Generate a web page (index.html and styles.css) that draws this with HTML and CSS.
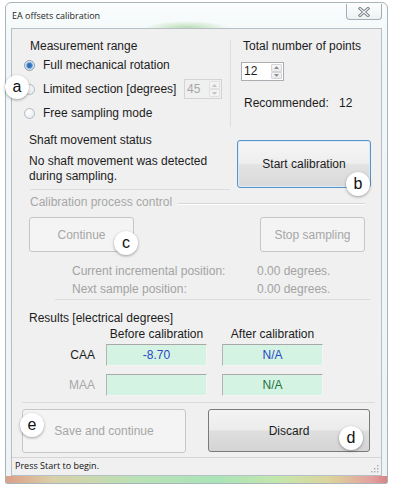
FILE: index.html
```html
<!DOCTYPE html>
<html>
<head>
<meta charset="utf-8">
<link rel="stylesheet" href="styles.css">
</head>
<body>
<div class="window">
  <div class="titlebar">
    <span class="title">EA offsets calibration</span>
    <div class="close">
      <svg width="12" height="10" viewBox="0 0 12 10"><path d="M2 1.5 L10 8.5 M10 1.5 L2 8.5" stroke="#7d8389" stroke-width="3" stroke-linecap="square"/><path d="M2 1.5 L10 8.5 M10 1.5 L2 8.5" stroke="#f4f6f7" stroke-width="1.1" stroke-linecap="square"/></svg>
    </div>
  </div>
  <div class="client">
    <div class="top">
      <div class="range">
        <div class="heading range-heading">Measurement range</div>
        <div class="radio-row"><span class="radio checked"></span><span>Full mechanical rotation</span></div>
        <div class="radio-row tall"><span class="radio"></span><span>Limited section [degrees]</span>
          <div class="spin spin-dis"><span class="spin-val">45</span><span class="spin-btns"><span class="spin-up"><svg width="5" height="3" viewBox="0 0 5 3"><path d="M0 3 L2.5 0 L5 3Z" fill="#c4c4c4"/></svg></span><span class="spin-down"><svg width="5" height="3" viewBox="0 0 5 3"><path d="M0 0 L2.5 3 L5 0Z" fill="#c4c4c4"/></svg></span></span></div>
        </div>
        <div class="radio-row"><span class="radio"></span><span>Free sampling mode</span></div>
      </div>
      <div class="vsep"></div>
      <div class="points">
        <div class="heading">Total number of points</div>
        <div class="spin spin-pts"><span class="spin-val">12</span><span class="spin-btns"><span class="spin-up"><svg width="5" height="3" viewBox="0 0 5 3"><path d="M0 3 L2.5 0 L5 3Z" fill="#8a8f94"/></svg></span><span class="spin-down"><svg width="5" height="3" viewBox="0 0 5 3"><path d="M0 0 L2.5 3 L5 0Z" fill="#8a8f94"/></svg></span></span></div>
        <div class="recommended"><span class="rec-label">Recommended:</span><span>12</span></div>
      </div>
    </div>
    <div class="status-section">
      <div class="shaft">
        <div class="line14">Shaft movement status</div>
        <div class="shaft-msg">No shaft movement was detected<br>during sampling.</div>
      </div>
      <button class="btn btn-focus start">Start calibration</button>
    </div>
    <div class="hline h1"></div>
    <div class="group">
      <div class="legend-row"><span class="legend">Calibration process control</span><span class="legend-line"></span></div>
      <div class="group-buttons">
        <button class="btn btn-dis cont" disabled>Continue</button>
        <button class="btn btn-dis stop" disabled>Stop sampling</button>
      </div>
      <div class="info">
        <span>Current incremental position:</span><span>0.00 degrees.</span>
        <span>Next sample position:</span><span>0.00 degrees.</span>
      </div>
    </div>
    <div class="hline h2"></div>
    <div class="results">
      <div class="res-heading">Results [electrical degrees]</div>
      <div class="res-grid">
        <span></span>
        <span class="col-head">Before calibration</span>
        <span class="col-head">After calibration</span>
        <span class="row-label">CAA</span>
        <span class="val blue">-8.70</span>
        <span class="val blue">N/A</span>
        <span class="row-label grey">MAA</span>
        <span class="val"></span>
        <span class="val green">N/A</span>
      </div>
    </div>
    <div class="hline h3"></div>
    <div class="bottom-buttons">
      <button class="btn btn-dis save" disabled>Save and continue</button>
      <button class="btn discard">Discard</button>
    </div>
    <div class="statusbar">
      <span class="status-text">Press Start to begin.</span>
      <svg class="grip" width="9" height="9" viewBox="0 0 9 9"><g fill="#a9a9a9"><rect x="7" y="1" width="1.4" height="1.4"/><rect x="4" y="4" width="1.4" height="1.4"/><rect x="7" y="4" width="1.4" height="1.4"/><rect x="1" y="7" width="1.4" height="1.4"/><rect x="4" y="7" width="1.4" height="1.4"/><rect x="7" y="7" width="1.4" height="1.4"/></g></svg>
    </div>
  </div>
  <div class="frame-bottom"></div>
</div>
<span class="badge badge-a">a</span>
<span class="badge badge-b">b</span>
<span class="badge badge-c">c</span>
<span class="badge badge-d">d</span>
<span class="badge badge-e">e</span>
</body>
</html>
```
FILE: styles.css
```css
html, body {
  margin: 0;
  padding: 0;
}
body {
  position: relative;
  width: 394px;
  height: 490px;
  overflow: hidden;
  background: #ffffff;
  font-family: "Liberation Sans", Arial, sans-serif;
  font-size: 12px;
  color: #1c1c1c;
}
.window {
  position: relative;
  margin: 2px 0 0 5px;
  width: 383px;
  box-sizing: border-box;
  border: 1px solid #aab4bb;
  border-radius: 6px 6px 2px 2px;
  padding: 0 5px;
  background: linear-gradient(180deg, #fafdfd 0, #f1f7f8 40px, #eef4f6 100%);
  overflow: hidden;
}
.titlebar {
  height: 25px;
  display: flex;
  justify-content: space-between;
  align-items: flex-start;
  background: radial-gradient(ellipse 42px 7px at 176px 25px, rgba(110, 185, 90, 0.45), rgba(110, 185, 90, 0) 100%);
}
.title {
  font-family: "Open Sans", "DejaVu Sans", sans-serif;
  font-size: 9px;
  line-height: 12px;
  margin: 7px 0 0 1px;
  color: #1e1e1e;
}
.close {
  width: 36px;
  height: 16px;
  margin-top: 1px;
  box-sizing: border-box;
  border: 1px solid #a3adb5;
  border-top: none;
  border-radius: 0 0 4px 4px;
  background: linear-gradient(180deg, #fdfdfd, #eef1f3);
  display: flex;
  align-items: center;
  justify-content: center;
}
.client {
  height: 448px;
  box-sizing: border-box;
  border: 1px solid #b7bec4;
  background: #f0f0f0;
}
.heading, .line14 {
  line-height: 14px;
  height: 14px;
}
.top {
  display: flex;
  height: 99px;
}
.range {
  width: 218px;
  box-sizing: border-box;
  padding: 10px 8px 0 12px;
}
.range-heading {
  padding-left: 6px;
  margin-bottom: 1px;
}
.radio-row {
  display: flex;
  align-items: center;
  height: 22px;
}
.radio-row.tall {
  height: 26px;
}
.radio {
  flex: none;
  width: 11px;
  height: 11px;
  box-sizing: border-box;
  border-radius: 50%;
  border: 1px solid #b5bbc0;
  background: radial-gradient(circle at 40% 35%, #ffffff, #e2e5e8);
  margin-right: 8px;
}
.radio.checked {
  border-color: #8e9ba8;
  background: radial-gradient(circle, #2a64ad 0, #3b7cc4 2.2px, #a9c9e8 3.4px, #eef2f6 4.5px);
}
.spin {
  display: flex;
  box-sizing: border-box;
  border: 1px solid #abadb3;
  background: #ffffff;
}
.spin-val {
  flex: 1;
  padding-left: 2px;
}
.spin-btns {
  width: 11px;
  display: flex;
  flex-direction: column;
  padding: 1px 1px 1px 0;
}
.spin-up, .spin-down {
  flex: 1;
  display: flex;
  align-items: center;
  justify-content: center;
  border: 1px solid #d3d5d8;
  background: linear-gradient(180deg, #f8f8f8, #e9e9e9);
  border-radius: 1px;
}
.spin-dis {
  width: 38px;
  height: 20px;
  margin-left: auto;
  border-color: #d2d4d7;
  background: #f0f0f0;
  color: #a6a6a6;
}
.spin-dis .spin-val {
  line-height: 18px;
}
.spin-dis .spin-up, .spin-dis .spin-down {
  border-color: #e1e2e4;
  background: #f3f3f3;
}
.vsep {
  width: 1px;
  height: 87px;
  margin-top: 11px;
  background: #dedede;
}
.points {
  padding: 10px 0 0 12px;
}
.spin-pts {
  width: 43px;
  height: 19px;
  margin: 9px 0 0 -2px;
}
.spin-pts .spin-val {
  line-height: 17px;
  padding-left: 2px;
}
.recommended {
  margin-top: 15px;
  padding-left: 1px;
  line-height: 14px;
}
.rec-label {
  display: inline-block;
  width: 95px;
}
.status-section {
  display: flex;
  justify-content: space-between;
  height: 61px;
  box-sizing: border-box;
  padding: 5px 10px 0 17px;
}
.shaft-msg {
  margin-top: 7px;
  line-height: 15px;
}
.btn {
  font-family: "Liberation Sans", Arial, sans-serif;
  font-size: 12px;
  padding: 0;
  margin: 0;
  box-sizing: border-box;
  border-radius: 3px;
  color: #1c1c1c;
  text-align: center;
}
.btn-focus {
  border: 1px solid #5a93c8;
  box-shadow: inset 0 0 0 1px #d6ecfa;
  background: linear-gradient(180deg, #f6f6f6 0%, #eeeeee 48%, #e2e2e2 52%, #d9d9d9 100%);
}
.start {
  width: 134px;
  height: 48px;
  margin-top: 7px;
}
.btn-dis {
  border: 1px solid #c4c6c8;
  background: #f4f4f4;
  color: #a6a6a6;
}
.hline {
  height: 1px;
  background: #dcdcdc;
}
.h1 {
  width: 200px;
  margin-left: 18px;
}
.group {
  padding: 5px 16px 0 17px;
}
.legend-row {
  display: flex;
  align-items: center;
  height: 14px;
  line-height: 14px;
}
.legend {
  padding-left: 1px;
  color: #a7a7a7;
}
.legend-line {
  flex: 1;
  margin: 4px 0 0 6px;
  height: 0;
  border-top: 1px solid #d6d6d6;
  border-bottom: 1px solid #ffffff;
}
.group-buttons {
  display: flex;
  justify-content: space-between;
  margin-top: 8px;
}
.cont, .stop {
  width: 105px;
  height: 35px;
}
.info {
  display: grid;
  grid-template-columns: 185px auto;
  margin-top: 10px;
  padding-left: 43px;
  line-height: 18px;
  color: #a3a3a3;
}
.h2 {
  margin: 1px 11px 0 43px;
}
.results {
  margin-top: 11px;
}
.res-heading {
  padding-left: 17px;
  line-height: 14px;
  height: 14px;
}
.res-grid {
  display: grid;
  grid-template-columns: 94px 116px 101px;
  grid-template-rows: 14px 25px 30px;
  align-items: end;
  margin-top: 2px;
}
.col-head {
  width: 101px;
  text-align: center;
  line-height: 14px;
  white-space: nowrap;
}
.row-label {
  text-align: right;
  padding-right: 11px;
  line-height: 22px;
}
.row-label.grey {
  color: #a8a8a8;
}
.val {
  width: 101px;
  height: 22px;
  box-sizing: border-box;
  border-top: 1px solid #a8a8a8;
  border-left: 1px solid #b4b4b4;
  border-right: 1px solid #f4f4f4;
  border-bottom: 1px solid #f4f4f4;
  background: #d4f3e3;
  text-align: center;
  line-height: 20px;
}
.val.blue {
  color: #2a47c6;
}
.val.green {
  color: #25703e;
}
.h3 {
  margin: 6px 6px 0 10px;
}
.bottom-buttons {
  display: flex;
  align-items: flex-start;
  gap: 22px;
  margin-top: 6px;
  padding-left: 10px;
  height: 44px;
}
.save {
  width: 164px;
  height: 44px;
}
.discard {
  width: 162px;
  height: 43px;
  border: 1px solid #7a7a7a;
  background: linear-gradient(180deg, #f3f3f3 0%, #ececec 48%, #dedede 52%, #d4d4d4 100%);
}
.statusbar {
  margin-top: 4px;
  height: 18px;
  box-sizing: border-box;
  border-top: 1px solid #d5d5d5;
  display: flex;
  justify-content: space-between;
  align-items: flex-end;
  padding: 0 2px 1px 3px;
}
.status-text {
  font-family: "Open Sans", "DejaVu Sans", sans-serif;
  font-size: 9px;
  line-height: 16px;
  color: #111111;
}
.grip {
  margin-bottom: 1px;
}
.frame-bottom {
  height: 7px;
  margin: 0 -5px;
  background: linear-gradient(90deg, #dc9f88 0%, #d9cfa8 12%, #b9e2b6 35%, #a9e4b8 55%, #c6e6ac 72%, #dcd49c 85%, #e3a0a0 96%, #d88484 100%);
}
.badge {
  position: absolute;
  width: 24px;
  height: 24px;
  border-radius: 50%;
  background: #ffffff;
  box-shadow: 0 1px 3px rgba(0, 0, 0, 0.35);
  display: flex;
  align-items: center;
  justify-content: center;
  font-family: "Liberation Sans", Arial, sans-serif;
  font-size: 16px;
  line-height: 16px;
  color: #111111;
}
.badge-a { left: 5px; top: 75px; }
.badge-b { left: 346px; top: 172px; }
.badge-c { left: 114px; top: 231px; }
.badge-d { left: 339px; top: 426px; }
.badge-e { left: 20px; top: 413px; }
```
